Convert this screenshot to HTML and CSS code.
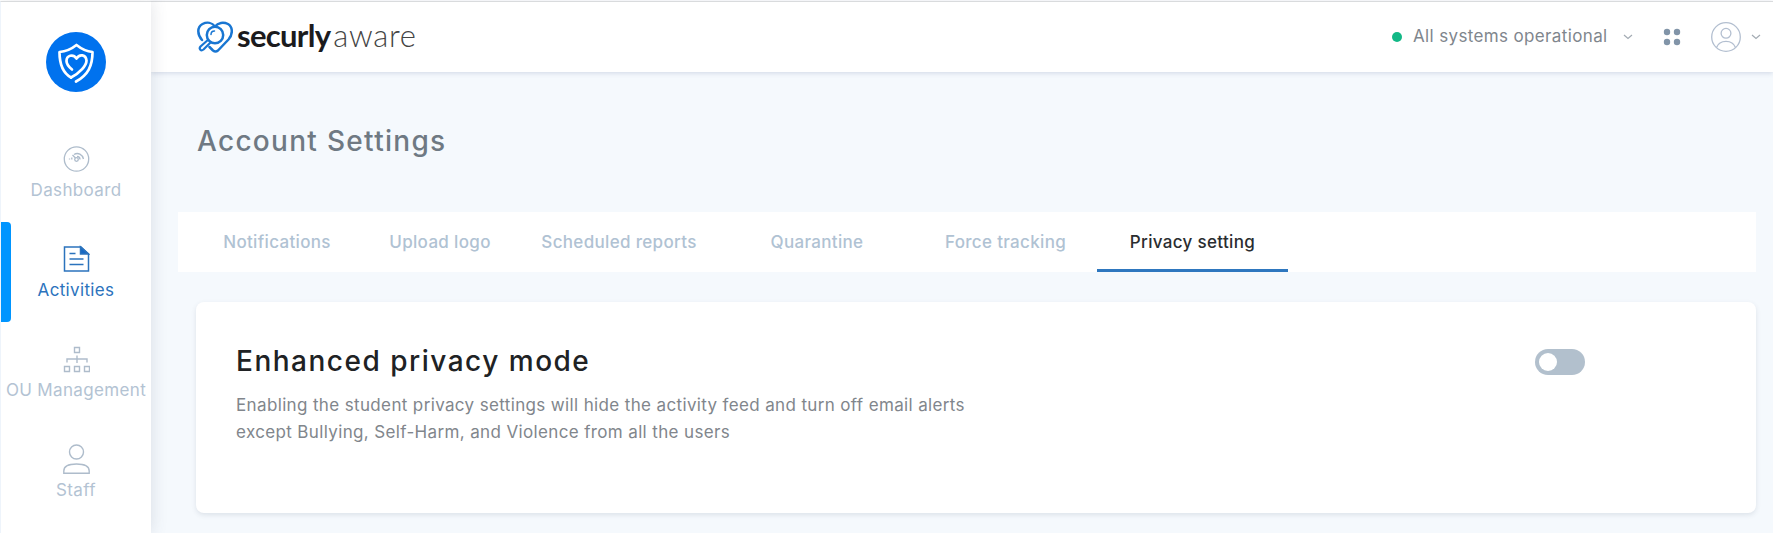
FILE: index.html
```html
<!DOCTYPE html>
<html>
<head>
    <meta charset="UTF-8">
    <title>Account Settings</title>
    <link rel="stylesheet" href="styles.css">
</head>
<body>
<div class="page">
    <div class="sidebar">
        <div class="brand">
            <svg width="60" height="60" viewBox="0 0 60 60" fill="none" stroke="#fff" stroke-width="2.7" stroke-linecap="round" stroke-linejoin="round">
                <circle cx="30" cy="30" r="30" fill="#0072ee" stroke="none"/>
                <path d="M25 45.500C17 41 13.500 33 13.500 20C20 19.500 25.500 17 30.500 13C35.500 17 41 19.500 46.500 20C46.500 34 42 43 30 49.500"/>
                <path d="M25 45.500C34 41 40.500 33.500 40.500 28.500C40 22.500 33.500 21.500 30.500 26.500C27 21.500 20.500 23.500 20.500 29C20.500 32.500 23 35 26 37.500"/>
            </svg>
        </div>
        <ul class="menu">
            <li>
                <svg width="27" height="30" viewBox="0 0 27 30" fill="none" stroke="#aebccb" stroke-width="1.3">
                    <circle cx="13.500" cy="15" r="12.200"/>
                    <circle cx="13.500" cy="15.500" r="1.800"/>
                    <path d="M12.500 14L9.500 11M11 10.500C15 8 19.500 10.500 20.500 15M14 12.500C16 12.500 17 14 17 15.500M6.500 14.500V15.500M8.800 13.500V15.500"/>
                </svg>
                <span>Dashboard</span>
            </li>
            <li class="active">
                <svg width="27" height="30" viewBox="0 0 27 30" fill="none" stroke="#2b73bd" stroke-width="1.5">
                    <path d="M1.500 3H18L25.500 10V27H1.500Z"/>
                    <path d="M17.500 3V10H25.500Z" fill="#1668c4"/>
                    <path d="M6.500 9.500H12.500M6.500 15H20.500M6.500 20.500H20.500"/>
                </svg>
                <span>Activities</span>
            </li>
            <li>
                <svg width="27" height="30" viewBox="0 0 27 30" fill="none" stroke="#aebccb" stroke-width="1.4">
                    <path d="M11.500 3.500h5v5h-5zM1.500 22.500h5v5h-5zM11.500 22.500h5v5h-5zM21.500 22.500h5v5h-5zM14 11.500V19M4 18.500V15H24V18.500"/>
                </svg>
                <span>OU Management</span>
            </li>
            <li>
                <svg width="27" height="30" viewBox="0 0 27 30" fill="none" stroke="#aebccb" stroke-width="1.4">
                    <circle cx="13.500" cy="8" r="7"/>
                    <path d="M.8 29.200V27C.8 22.500 5.500 20 13.500 20S26.200 22.500 26.200 27V29.200Z"/>
                </svg>
                <span>Staff</span>
            </li>
        </ul>
    </div>
    <div class="main">
        <div class="header">
            <div class="logo">
                <svg width="36" height="32" viewBox="0 0 36 32" fill="none" stroke="#1976d2" stroke-width="2.5" stroke-linecap="round" stroke-linejoin="round">
                    <path d="M5 19C0 13.500 0 6 5.500 3C10 .8 15 1.500 18 5.500C21 1.500 26.500 .8 31 3C36 6 36 13.500 31.500 18.500L21 29.500Q18.500 31.500 16 29.500L12.500 26"/>
                    <path d="M12 18L3.500 25.500C1.500 28 4 30.500 6.500 28.500L14.500 20.500" fill="#fff" stroke-width="2.2"/>
                    <circle cx="18" cy="14" r="8.200" fill="#fff"/>
                    <path d="M14 13.500C14 11.500 15.500 10 17.500 10" stroke-width="1.5"/>
                </svg>
                <span class="securly">securly</span>
                <span class="aware">aware</span>
            </div>
            <div class="tools">
                <i class="dot"></i>
                <span class="status">All systems operational</span>
                <svg class="arrow" width="10" height="6" viewBox="0 0 10 6" fill="none" stroke="#a3abb3" stroke-width="1.2"><path d="M1 1L5 4.500L9 1"/></svg>
                <svg class="apps" width="18" height="18" viewBox="0 0 18 18" fill="#8194a8">
                    <circle cx="4" cy="4" r="3.200"/><circle cx="14" cy="4" r="3.200"/>
                    <circle cx="4" cy="14" r="3.200"/><circle cx="14" cy="14" r="3.200"/>
                </svg>
                <svg class="user" width="30" height="30" viewBox="0 0 30 30" fill="none" stroke="#b3bfd0" stroke-width="1.3">
                    <circle cx="15" cy="15" r="14.300"/>
                    <circle cx="15" cy="11.300" r="4.900"/>
                    <path d="M5.500 25.500C7 21.500 10.500 19.300 15 19.300S23 21.500 24.500 25.500"/>
                </svg>
                <svg class="arrow" width="10" height="6" viewBox="0 0 10 6" fill="none" stroke="#a3abb3" stroke-width="1.2"><path d="M1 1L5 4.500L9 1"/></svg>
            </div>
        </div>
        <h1>Account Settings</h1>
        <ul class="tabs">
            <li class="t1">Notifications</li>
            <li class="t2">Upload logo</li>
            <li class="t3">Scheduled reports</li>
            <li class="t4">Quarantine</li>
            <li class="t5">Force tracking</li>
            <li class="t6 on">Privacy setting</li>
        </ul>
        <div class="card">
            <div class="info">
                <h2>Enhanced privacy mode</h2>
                <p>Enabling the student privacy settings will hide the activity feed and turn off email alerts<br>except Bullying, Self-Harm, and Violence from all the users</p>
            </div>
            <div class="switch"><i></i></div>
        </div>
    </div>
</div>
</body>
</html>
```
FILE: styles.css
```css
* {
    margin: 0;
    padding: 0;
    box-sizing: border-box;
}

body {
    font-family: Inter, "Liberation Sans", sans-serif;
    background: #f5f9fd;
    overflow: hidden;
}

li {
    list-style: none;
}

svg {
    display: block;
    flex: none;
}

.page {
    display: flex;
    height: 533px;
    border-top: 1px solid #fff;
}

.sidebar {
    position: relative;
    z-index: 2;
    width: 151px;
    height: 532px;
    flex: none;
    background: #fff;
    border-top: 1px solid #d9dbdd;
    border-left: 1px solid #eef4fb;
    box-shadow: 2px 0 14px rgba(70, 80, 100, .13);
}

.brand {
    height: 120px;
    padding: 30px 0 0 45px;
}

.menu li {
    display: flex;
    flex-direction: column;
    align-items: center;
    height: 100px;
    padding-top: 22px;
    color: #b3c3d3;
    font-size: 17px;
    line-height: 24px;
    letter-spacing: .35px;
    white-space: nowrap;
}

.menu span {
    margin-top: 4px;
}

.menu li.active {
    position: relative;
    color: #2b73bd;
}

.menu li.active:before {
    content: "";
    position: absolute;
    left: 0;
    top: 0;
    width: 10px;
    height: 100px;
    border-radius: 0 4px 4px 0;
    background: #0095ff;
}

.main {
    flex: 1;
}

.header {
    display: flex;
    justify-content: space-between;
    height: 71px;
    padding: 0 12px 0 46px;
    background: #fff;
    border-top: 1px solid #d9dbdd;
    box-shadow: 0 1px 5px rgba(60, 80, 130, .2);
}

.logo {
    display: flex;
    padding-top: 19px;
    font-family: Lato, sans-serif;
    font-size: 31px;
    line-height: 29px;
}

.securly {
    margin-left: 4px;
    color: #1b1b1d;
    font-weight: bold;
    letter-spacing: -.7px;
}

.aware {
    margin-left: 3px;
    color: #444;
    font-weight: 300;
    letter-spacing: .7px;
}

.tools {
    display: flex;
    align-items: center;
    height: 70px;
    color: #7f868d;
    font-size: 17px;
}

.dot {
    width: 10px;
    height: 10px;
    margin-right: 11px;
    border-radius: 50%;
    background: #12b886;
}

.status {
    width: 194px;
    padding-bottom: 3px;
    letter-spacing: .36px;
    white-space: nowrap;
}

.apps {
    margin: 0 30px 0 30px;
}

.status + .arrow {
    margin-left: 16px;
}

.user {
    margin-right: 10px;
}

h1 {
    padding: 51px 0 0 46px;
    color: #6f7983;
    font-size: 28px;
    line-height: 36px;
    font-weight: 450;
    letter-spacing: 1.3px;
}

.tabs {
    display: flex;
    height: 60px;
    margin: 53px 17px 0 27px;
    padding-left: 14px;
    background: #fff;
    color: #b0c2d3;
    font-size: 17px;
    font-weight: 500;
    line-height: 61px;
    letter-spacing: .33px;
    text-align: center;
}

.t1 {
    width: 170px;
}

.t2 {
    width: 156px;
}

.t3 {
    width: 202px;
}

.t4 {
    width: 194px;
}

.t5 {
    width: 183px;
}

.t6 {
    width: 191px;
}

.tabs .on {
    color: #2a2d30;
    border-bottom: 3px solid #2e77bf;
}

.card {
    display: flex;
    justify-content: space-between;
    height: 211px;
    margin: 30px 17px 0 45px;
    padding: 41px 171px 0 40px;
    border-radius: 8px;
    background: #fff;
    box-shadow: 0 2px 5px rgba(60, 80, 100, .13);
}

h2 {
    color: #202224;
    font-size: 28px;
    line-height: 36px;
    font-weight: 450;
    letter-spacing: 1.5px;
}

p {
    margin-top: 13px;
    color: #81868c;
    font-size: 17px;
    line-height: 27px;
    letter-spacing: .36px;
    white-space: nowrap;
}

.switch {
    width: 50px;
    height: 26px;
    margin-top: 6px;
    padding: 4px;
    border-radius: 13px;
    background: #b2c0cd;
}

.switch i {
    display: block;
    width: 18px;
    height: 18px;
    border-radius: 50%;
    background: #fff;
}
```
